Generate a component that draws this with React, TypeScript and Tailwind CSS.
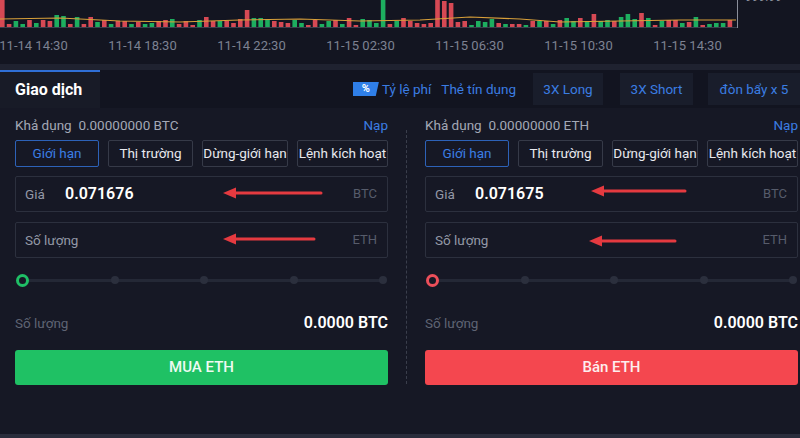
import React from "react";

type Bar = { h: number; up: boolean };

// volume bars under the price chart
function makeBars(): Bar[] {
  let seed = 7;
  const rnd = () => {
    seed = (seed * 9301 + 49297) % 233280;
    return seed / 233280;
  };
  const bars: Bar[] = [];
  for (let i = 0; i < 108; i++) {
    bars.push({ h: 3 + Math.round(rnd() * 8), up: rnd() > 0.5 });
  }
  const special: Record<number, Bar> = {
    0: { h: 28, up: false },
    8: { h: 13, up: true },
    9: { h: 12, up: true },
    36: { h: 18, up: false },
    56: { h: 28, up: true },
    64: { h: 28, up: false },
    65: { h: 27, up: false },
    66: { h: 25, up: false },
    87: { h: 14, up: false },
    92: { h: 14, up: true },
    94: { h: 15, up: false },
  };
  return bars.map((b, i) => special[i] ?? b);
}

const BARS = makeBars();
const TIMES = [
  "11-14 14:30",
  "11-14 18:30",
  "11-14 22:30",
  "11-15 02:30",
  "11-15 06:30",
  "11-15 10:30",
  "11-15 14:30",
];

function Chart() {
  return (
    <div className="h-[64px] bg-[#131521]">
      <div className="flex h-[28px]">
        <svg width="738" height="28" className="block">
          {BARS.map((b, i) => (
            <rect
              key={i}
              x={i * 6.8}
              y={28 - b.h}
              width={4.6}
              height={b.h}
              fill={b.up ? "#1fbf66" : "#ec4f5a"}
              opacity={0.9}
            />
          ))}
          <polyline
            points="0,19 60,18 120,21 180,22 240,20 300,19 360,21 420,20 470,17 520,19 560,22 620,21 680,20 736,20"
            fill="none"
            stroke="#d9a03a"
            strokeWidth="1.2"
          />
          <line x1="0" y1="27.5" x2="738" y2="27.5" stroke="#3b3f4d" strokeWidth="1" />
          <line x1="737.5" y1="0" x2="737.5" y2="28" stroke="#8a8e9a" strokeWidth="1" />
        </svg>
        <div className="-mt-[9px] pl-[7px] text-[12px] leading-[12px] text-[#8a8f9c]">999.99</div>
      </div>
      <div className="ml-[-21px] mt-[10px] flex text-[13px] leading-[16px] text-[#7d8292]">
        {TIMES.map((t) => (
          <div key={t} className="w-[109px] shrink-0 text-center">
            {t}
          </div>
        ))}
      </div>
    </div>
  );
}

function TabRow() {
  return (
    <div className="flex h-[38px] items-stretch bg-[#121420]">
      <div className="flex w-[100px] items-center border-t-2 border-[#2f6fd6] bg-[#181b27] pl-[15px] text-[16px] font-bold text-white">
        Giao dịch
      </div>
      <div className="flex flex-1 items-center justify-end text-[13.5px] text-[#3b7de3]">
        <span className="mr-[3px] flex h-[14px] w-[26px] items-center justify-center bg-[#2f7fe8] text-[11px] font-bold text-white [clip-path:polygon(0_0,100%_0,88%_100%,0_100%)]">
          %
        </span>
        <span>Tỷ lệ phí</span>
        <span className="ml-[10px]">Thẻ tín dụng</span>
        <span className="ml-[17px] flex h-[32px] w-[70px] items-center justify-center bg-[#191d2b]">3X Long</span>
        <span className="ml-[17px] flex h-[32px] w-[73px] items-center justify-center bg-[#191d2b]">3X Short</span>
        <span className="ml-[15px] flex h-[32px] w-[92px] items-center justify-center bg-[#191d2b]">đòn bẩy x 5</span>
      </div>
    </div>
  );
}

function Arrow({ w }: { w: number }) {
  return (
    <svg width={w} height="12" className="block">
      <path d={`M12 6 L${w - 2} 6`} stroke="#e53a40" strokeWidth="3" strokeLinecap="round" />
      <path d="M0 6 L13 0.5 L13 11.5 Z" fill="#e53a40" />
    </svg>
  );
}

function Field({
  label,
  value,
  unit,
  arrowLeft,
  arrowW,
  arrowDy,
}: {
  label: string;
  value?: string;
  unit: string;
  arrowLeft: string;
  arrowW: number;
  arrowDy: string;
}) {
  return (
    <div className="relative flex h-[36px] items-center rounded-[2px] border border-[#2c303e] pl-[9px] pr-[10px]">
      <span className="min-w-[40px] whitespace-nowrap text-[13.5px] text-[#9398a7]">{label}</span>
      {value ? <span className="text-[16px] font-semibold text-white">{value}</span> : null}
      <span className="ml-auto text-[13px] text-[#575c6b]">{unit}</span>
      <div className={`absolute ${arrowLeft} ${arrowDy}`}>
        <Arrow w={arrowW} />
      </div>
    </div>
  );
}

function OrderPanel({ side }: { side: "buy" | "sell" }) {
  const buy = side === "buy";
  const types = ["Giới hạn", "Thị trường", "Dừng-giới hạn", "Lệnh kích hoạt"];
  const widths = ["w-[84px]", "w-[85px]", "w-[86px]", "flex-1"];
  return (
    <div className="flex w-[373px] shrink-0 flex-col">
      <div className="mt-[8px] flex h-[18px] items-center text-[13.5px] text-[#a3a8b6]">
        <span className="whitespace-nowrap">Khả dụng&nbsp; 0.00000000 {buy ? "BTC" : "ETH"}</span>
        <span className="ml-auto whitespace-nowrap text-[#3b7de3]">Nạp</span>
      </div>
      <div className="mt-[6px] flex gap-[9px]">
        {types.map((t, i) => (
          <div
            key={t}
            className={`flex h-[27px] items-center justify-center whitespace-nowrap rounded-[2px] border text-[13.5px] ${widths[i]} ${
              i === 0 ? "border-[#2d62b8] text-[#3b7de3]" : "border-[#363a48] text-[#e8e9ee]"
            }`}
          >
            {t}
          </div>
        ))}
      </div>
      <div className="mt-[9px]">
        <Field
          label="Giá"
          value={buy ? "0.071676" : "0.071675"}
          unit="BTC"
          arrowLeft={buy ? "left-[207px]" : "left-[165px]"}
          arrowW={buy ? 100 : 96}
          arrowDy={buy ? "top-[10px]" : "top-[8px]"}
        />
      </div>
      <div className="mt-[10px]">
        <Field
          label="Số lượng"
          unit="ETH"
          arrowLeft={buy ? "left-[207px]" : "left-[163px]"}
          arrowW={buy ? 93 : 88}
          arrowDy={buy ? "top-[10px]" : "top-[12px]"}
        />
      </div>
      <div className="relative mt-[14px] flex h-[16px] items-center justify-between pl-[1px] pr-[1px]">
        <div className="absolute left-[8px] right-[4px] top-[7px] h-[3px] rounded bg-[#242836]" />
        <span
          className={`relative h-[13px] w-[13px] rounded-full border-[3px] bg-[#161825] ${
            buy ? "border-[#1fbf66]" : "border-[#ec4f5a]"
          }`}
        />
        {[0, 1, 2, 3].map((k) => (
          <span key={k} className="relative h-[8px] w-[8px] rounded-full bg-[#2b2f3d]" />
        ))}
      </div>
      <div className="mt-[25px] flex h-[20px] items-center">
        <span className="text-[13.5px] text-[#5f6474]">Số lượng</span>
        <span className="ml-auto text-[16px] font-semibold text-white">0.0000 BTC</span>
      </div>
      <div
        className={`mt-[17px] flex h-[35px] items-center justify-center rounded-[3px] text-[15px] font-medium ${
          buy ? "bg-[#1fc164] text-[#eefaf2]" : "bg-[#f4474f] text-[#fdeeee]"
        }`}
      >
        {buy ? "MUA ETH" : "Bán ETH"}
      </div>
    </div>
  );
}

export default function App() {
  return (
    <div className="flex h-[438px] w-[800px] flex-col overflow-hidden bg-[#161825] font-['Roboto','Liberation_Sans',sans-serif]">
      <Chart />
      <div className="h-[6px] bg-[#1f2230]" />
      <TabRow />
      <div className="flex flex-1 pl-[15px]">
        <OrderPanel side="buy" />
        <div className="flex w-[37px] shrink-0 justify-center pb-[50px] pt-[22px]">
          <div className="w-0 border-l border-dashed border-[#3a3e4c]" />
        </div>
        <OrderPanel side="sell" />
      </div>
      <div className="h-[4px] bg-[#2a2d3c]" />
    </div>
  );
}
